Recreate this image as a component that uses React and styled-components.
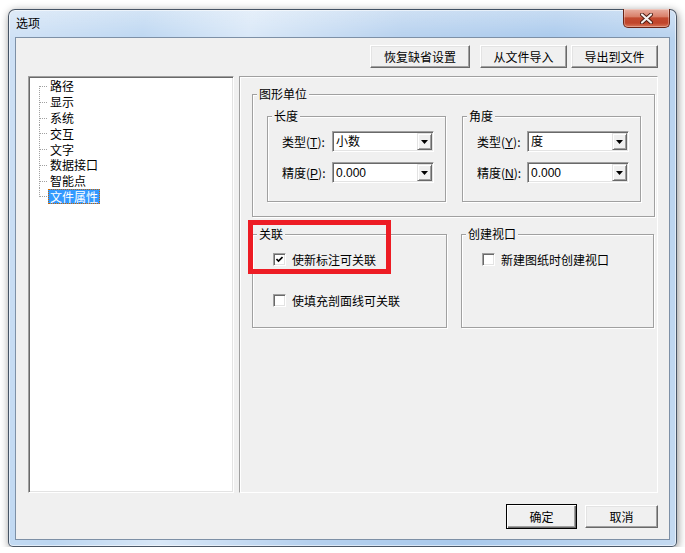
import styled, { createGlobalStyle } from 'styled-components'

const TREE_ITEMS = ['路径', '显示', '系统', '交互', '文字', '数据接口', '智能点', '文件属性']
const SELECTED = '文件属性'

const GlobalStyle = createGlobalStyle`
  html, body { margin: 0; padding: 0; background: #fff; }
  body {
    font-family: "Liberation Sans", "Noto Sans CJK SC", sans-serif;
    font-size: 12px;
    color: #000;
  }
`

export default function App() {
  return (
    <>
      <GlobalStyle />
      <Page>
        <Window>
          <TitleBar>
            <Title>选项</Title>
            <CloseButton>
              <svg width="13" height="11" viewBox="0 0 13 11">
                <path d="M2 1.5 L11 9.5 M11 1.5 L2 9.5" stroke="#4a1a10" strokeWidth="4" strokeLinecap="round" />
                <path d="M2 1.5 L11 9.5 M11 1.5 L2 9.5" stroke="#f4f0ee" strokeWidth="2.2" strokeLinecap="round" />
              </svg>
            </CloseButton>
          </TitleBar>
          <Client>
            <TopBar>
              <Button $w={100}>恢复缺省设置</Button>
              <Button $w={87} $ml={10}>从文件导入</Button>
              <Button $w={87} $ml={4}>导出到文件</Button>
            </TopBar>
            <MainRow>
              <Tree>
                <TreeList>
                  {TREE_ITEMS.map((item, i) => (
                    <TreeRow key={item}>
                      <Connector first={i === 0} last={i === TREE_ITEMS.length - 1} />
                      <TreeLabel $selected={item === SELECTED}>{item}</TreeLabel>
                    </TreeRow>
                  ))}
                </TreeList>
              </Tree>
              <Panel>
                <GroupBox $h={123}>
                  <Caption>图形单位</Caption>
                  <UnitGrid>
                    <GroupBox $h={86}>
                      <Caption>长度</Caption>
                      <FieldGrid>
                        <FieldLabel>类型(<u>T</u>):</FieldLabel>
                        <Combo value="小数" />
                        <FieldLabel>精度(<u>P</u>):</FieldLabel>
                        <Combo value="0.000" />
                      </FieldGrid>
                    </GroupBox>
                    <GroupBox $h={86}>
                      <Caption>角度</Caption>
                      <FieldGrid>
                        <FieldLabel>类型(<u>Y</u>):</FieldLabel>
                        <Combo value="度" />
                        <FieldLabel>精度(<u>N</u>):</FieldLabel>
                        <Combo value="0.000" />
                      </FieldGrid>
                    </GroupBox>
                  </UnitGrid>
                </GroupBox>
                <OptionRow>
                  <GroupBox $h={94}>
                    <Caption>关联</Caption>
                    <CheckList>
                      <Check checked label="使新标注可关联" />
                      <Check label="使填充剖面线可关联" />
                    </CheckList>
                  </GroupBox>
                  <GroupBox $h={94}>
                    <Caption>创建视口</Caption>
                    <CheckList>
                      <Check label="新建图纸时创建视口" />
                    </CheckList>
                  </GroupBox>
                </OptionRow>
                <Highlight />
              </Panel>
            </MainRow>
            <BottomBar>
              <Button $w={71} $primary>确定</Button>
              <Button $w={73} $ml={8}>取消</Button>
            </BottomBar>
          </Client>
        </Window>
      </Page>
    </>
  )
}

function Connector({ first, last }) {
  return (
    <ConnectorSvg width="9" height="16" viewBox="0 0 9 16">
      <line x1="0.5" y1={first ? 8 : 0} x2="0.5" y2={last ? 9 : 16} stroke="#a0a0a0" strokeDasharray="1 1" />
      <line x1="1" y1="8.5" x2="9" y2="8.5" stroke="#a0a0a0" strokeDasharray="1 1" />
    </ConnectorSvg>
  )
}

function Combo({ value }) {
  return (
    <ComboBox>
      <ComboText>{value}</ComboText>
      <DropButton>
        <svg width="7" height="4" viewBox="0 0 7 4">
          <polygon points="0,0 7,0 3.5,4" fill="#000" />
        </svg>
      </DropButton>
    </ComboBox>
  )
}

function Check({ checked, label }) {
  return (
    <CheckRow>
      <CheckBox>
        {checked && (
          <svg width="7" height="7" viewBox="0 0 7 7">
            <path d="M0.5 3 L2.5 5 L6.5 1" stroke="#000" strokeWidth="1.6" fill="none" />
          </svg>
        )}
      </CheckBox>
      <span>{label}</span>
    </CheckRow>
  )
}

const Page = styled.div`
  padding: 9px 0 0 8px;
`

const Window = styled.div`
  box-sizing: border-box;
  width: 669px;
  height: 538px;
  display: flex;
  flex-direction: column;
  padding: 0 6px 6px 6px;
  border: 1px solid rgba(30, 40, 55, 0.75);
  border-radius: 7px 7px 5px 5px;
  background:
    linear-gradient(180deg, rgba(255,255,255,0.35), rgba(255,255,255,0) 30px),
    linear-gradient(100deg, #cfe1f5 0%, #bcd6f1 18%, #d8e7f7 32%, #b5d0ee 52%, #a9c9ec 72%, #c4daf1 100%);
  box-shadow: inset 0 0 0 1px rgba(255,255,255,0.55), 1px 2px 8px rgba(0,0,0,0.45);
`

const TitleBar = styled.div`
  height: 27px;
  display: flex;
  align-items: flex-start;
`

const Title = styled.div`
  margin: 6px 0 0 1px;
  line-height: 14px;
  font-family: "Noto Sans CJK SC", sans-serif;
  font-size: 12px;
  color: #000;
`

const CloseButton = styled.div`
  margin-left: auto;
  margin-top: -1px;
  box-sizing: border-box;
  width: 47px;
  height: 19px;
  display: flex;
  align-items: center;
  justify-content: center;
  border: 1px solid #6a2416;
  border-top: none;
  border-radius: 0 0 5px 5px;
  background: linear-gradient(180deg, #e8b0a2 0%, #d9806a 42%, #c24a30 50%, #c0452b 78%, #d9775a 100%);
  box-shadow: inset 0 0 0 1px rgba(255, 255, 255, 0.3);
`

const Client = styled.div`
  flex: 1;
  display: flex;
  flex-direction: column;
  padding: 7px 11px 10px 12px;
  border: 1px solid #7d90a6;
  background: #f0f0f0;
`

const TopBar = styled.div`
  display: flex;
  justify-content: flex-end;
`

const Button = styled.div`
  box-sizing: border-box;
  width: ${p => p.$w}px;
  height: ${p => (p.$primary ? 25 : 23)}px;
  margin-left: ${p => p.$ml || 0}px;
  display: flex;
  align-items: center;
  justify-content: center;
  background: #f0f0f0;
  font-family: "Noto Sans CJK SC", sans-serif;
  font-size: 12px;
  border: 1px solid;
  border-color: ${p => (p.$primary ? '#000' : '#fff #696969 #696969 #fff')};
  box-shadow: ${p => (p.$primary
    ? 'inset 1px 1px 0 #fff, inset -1px -1px 0 #696969, inset -2px -2px 0 #a0a0a0'
    : 'inset -1px -1px 0 #a0a0a0, inset 1px 1px 0 #e3e3e3')};
`

const MainRow = styled.div`
  margin-top: 8px;
  height: 417px;
  display: flex;
  gap: 5px;
`

const Tree = styled.div`
  box-sizing: border-box;
  width: 206px;
  background: #fff;
  border: 1px solid;
  border-color: #a0a0a0 #fff #fff #a0a0a0;
  box-shadow: inset 1px 1px 0 #696969, inset -1px -1px 0 #e3e3e3;
  padding: 1px 0 0 10px;
`

const TreeList = styled.div`
  display: flex;
  flex-direction: column;
`

const TreeRow = styled.div`
  height: 15.8px;
  display: flex;
  align-items: center;
`

const ConnectorSvg = styled.svg`
  display: block;
  flex: none;
  shape-rendering: crispEdges;
`

const TreeLabel = styled.span`
  box-sizing: border-box;
  height: 15px;
  line-height: 13px;
  padding: 0 1px;
  font-family: "Noto Sans CJK SC", sans-serif;
  border: 1px ${p => (p.$selected ? 'dotted #cc6600' : 'solid transparent')};
  background: ${p => (p.$selected ? '#3399ff' : 'transparent')};
  color: ${p => (p.$selected ? '#fff' : '#000')};
`

const Panel = styled.div`
  position: relative;
  flex: 1;
  display: flex;
  flex-direction: column;
  padding: 17px 2px 0 12px;
  border: 1px solid;
  border-color: #a0a0a0 #fff #fff #a0a0a0;
  box-shadow: inset 1px 1px 0 #fff;
`

const GroupBox = styled.div`
  position: relative;
  box-sizing: border-box;
  height: ${p => p.$h}px;
  border: 1px solid #a0a0a0;
  box-shadow: 1px 1px 0 #fff, inset 1px 1px 0 #fff;
`

const Caption = styled.span`
  position: absolute;
  top: -8px;
  left: 4px;
  padding: 0 2px;
  line-height: 14px;
  background: #f0f0f0;
  font-family: "Noto Sans CJK SC", sans-serif;
`

const UnitGrid = styled.div`
  display: grid;
  grid-template-columns: 179px 179px;
  column-gap: 16px;
  padding: 21px 12px 0 14px;
`

const FieldGrid = styled.div`
  display: grid;
  grid-template-columns: 50px 102px;
  grid-auto-rows: 21px;
  row-gap: 10px;
  align-items: center;
  padding: 14px 0 0 14px;
`

const FieldLabel = styled.span`
  white-space: nowrap;
  font-family: "Noto Sans CJK SC", sans-serif;
  u { font-family: "Liberation Sans", sans-serif; }
`

const ComboBox = styled.div`
  box-sizing: border-box;
  height: 21px;
  display: flex;
  align-items: center;
  padding: 1px;
  background: #fff;
  border: 1px solid;
  border-color: #a0a0a0 #fff #fff #a0a0a0;
  box-shadow: inset 1px 1px 0 #696969, inset -1px -1px 0 #e3e3e3;
`

const ComboText = styled.span`
  flex: 1;
  padding-left: 2px;
  padding-top: 1px;
  line-height: 15px;
  font-family: "Liberation Sans", "Noto Sans CJK SC", sans-serif;
`

const DropButton = styled.div`
  box-sizing: border-box;
  width: 15px;
  height: 17px;
  display: flex;
  align-items: center;
  justify-content: center;
  background: #f0f0f0;
  border: 1px solid;
  border-color: #e3e3e3 #696969 #696969 #e3e3e3;
  box-shadow: inset 1px 1px 0 #fff, inset -1px -1px 0 #a0a0a0;
`

const OptionRow = styled.div`
  margin-top: 17px;
  display: grid;
  grid-template-columns: 195px 193px;
  column-gap: 14px;
`

const CheckList = styled.div`
  display: flex;
  flex-direction: column;
  gap: 28px;
  padding: 18px 0 0 20px;
`

const CheckRow = styled.div`
  height: 13px;
  display: flex;
  align-items: center;
  gap: 6px;
  white-space: nowrap;
  font-family: "Noto Sans CJK SC", sans-serif;
`

const CheckBox = styled.span`
  box-sizing: border-box;
  width: 13px;
  height: 13px;
  display: flex;
  align-items: center;
  justify-content: center;
  background: #fff;
  border: 1px solid;
  border-color: #a0a0a0 #fff #fff #a0a0a0;
  box-shadow: inset 1px 1px 0 #696969, inset -1px -1px 0 #e3e3e3;
`

const Highlight = styled.div`
  position: absolute;
  left: 8px;
  top: 143px;
  width: 143px;
  height: 54px;
  box-sizing: border-box;
  border: 5px solid #ed1c24;
  pointer-events: none;
`

const BottomBar = styled.div`
  margin-top: 11px;
  display: flex;
  justify-content: flex-end;
  align-items: center;
`
